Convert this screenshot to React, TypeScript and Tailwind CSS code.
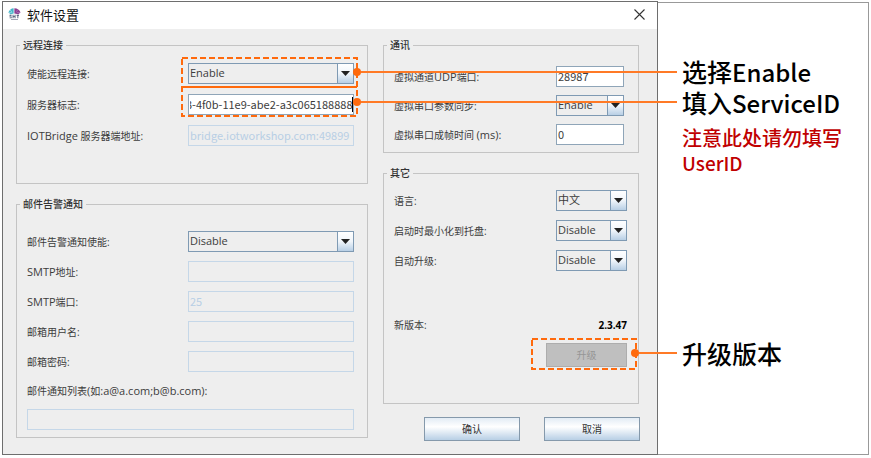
import React, { useEffect, useRef } from "react"

const labelText = "text-[10px] leading-[14px] text-[#3c3c3c]"
const fieldBase = "h-[21px] min-w-0 border text-[11px] leading-[14px] px-px pb-[2px] outline-none"

type GroupProps = { title: string; className: string; children: React.ReactNode }

const Group: React.FC<GroupProps> = ({ title, className, children }) => {
    return (
        <fieldset className={`border border-[#c4c4c4] flex flex-col ${className}`}>
            <legend className="-ml-[7px] px-[3px] text-[10px] leading-[14px] font-medium text-[#333333]">{title}</legend>
            {children}
        </fieldset>
    )
}

type RowProps = { id: string; label: React.ReactNode; children: React.ReactNode }

const Row: React.FC<RowProps> = ({ id, label, children }) => {
    return (
        <div className="flex items-center justify-between">
            <label htmlFor={id} className={`${labelText} whitespace-nowrap`}>{label}</label>
            {children}
        </div>
    )
}

type FieldProps = { id: string; value?: string; disabled?: boolean; className: string }

const Field: React.FC<FieldProps> = ({ id, value = "", disabled = false, className }) => {
    const ref = useRef<HTMLInputElement>(null)

    // long values show their end, where the caret is
    useEffect(() => {
        if (ref.current && !disabled) ref.current.scrollLeft = ref.current.scrollWidth
    }, [disabled])

    const look = disabled
        ? "border-[#c5d7e8] bg-[#eeeeee] text-[#b8cfe5]"
        : "border-[#8fa5b8] bg-white text-[#3c3c3c]"
    return <input ref={ref} id={id} type="text" defaultValue={value} disabled={disabled} className={`${fieldBase} font-['Noto_Sans_CJK_SC',sans-serif] ${look} ${className}`} />
}

type DropdownProps = { id: string; options: string[]; className: string }

const Dropdown: React.FC<DropdownProps> = ({ id, options, className }) => {
    return (
        <div className={`relative ${className}`}>
            <select id={id} className={`${fieldBase} block w-full appearance-none border-[#7f9ab3] bg-[#eeeeee] text-[#3c3c3c]`}>
                {options.map((o) => (
                    <option key={o}>{o}</option>
                ))}
            </select>
            {/* arrow button */}
            <span className="pointer-events-none absolute inset-y-0 right-0 flex w-[17px] items-center justify-center border border-[#7f9ab3] bg-linear-to-b from-white via-[#f0f5fa] to-[#b8cfe5]">
                <svg width="9" height="5" viewBox="0 0 9 5">
                    <path d="M0 0h9L4.5 5z" fill="#222222" />
                </svg>
            </span>
        </div>
    )
}

const Latin: React.FC<{ children: React.ReactNode }> = ({ children }) => <span className="text-[11px]">{children}</span>

const TitleBar: React.FC = () => {
    return (
        <div className="flex h-[27px] items-center justify-between bg-white pb-[2px] pl-[5px] pr-3">
            <div className="flex items-center gap-[6px]">
                <svg width="13" height="13" viewBox="0 0 13 13">
                    <path d="M5.6 0.3C3.2 0.5 1.4 1.8 0.4 4.4L2.6 6.2L5.6 5.4z" fill="#45b5c9" />
                    <path d="M2 2.2l2 1.6M0.9 4.6h3.4" stroke="#d6f2f6" strokeWidth="0.5" />
                    <path d="M6.4 0.3c3 0 5.3 1.6 6.1 4.3L10.4 6.2L6.4 5.4z" fill="#8a3f92" />
                    <path d="M9.6 1.8L8.4 3.8M12 4.6H8.8" stroke="#c99bd0" strokeWidth="0.5" />
                    <path d="M1.6 6.8h2v1H2.4v0.6h1.2v1.8h-2V9.4h1.2V8.8H1.6zM4.6 6.8h0.9v1.2h1.1V6.8h0.9v3.4h-0.9V8.8H5.5v1.4H4.6zM8.6 6.8h2.4v0.9h-0.7v2.5H9.4V7.7H8.6z" fill="#4b5674" />
                    <path d="M3 11h7v1H3z" fill="#a3a5b5" />
                </svg>
                <h1 className="text-[13px] leading-4 text-[#111111]">软件设置</h1>
            </div>
            <button aria-label="关闭" className="flex items-center">
                <svg width="11" height="11" viewBox="0 0 11 11">
                    <path d="M0.5 0.5l10 10M10.5 0.5l-10 10" stroke="#333333" strokeWidth="1.1" />
                </svg>
            </button>
        </div>
    )
}

const dialogButton = "h-6 w-24 border border-[#8599ab] bg-linear-to-b from-[#e3ecf5] via-white via-40% to-[#b8cfe5] text-[10px] leading-[14px] text-[#333333]"
const dash = { fill: "none", stroke: "#ff6a0d", strokeWidth: 2, strokeDasharray: "6 3" }

// line with a dot at its left end, runs out over the dialog's right edge
const Pointer: React.FC<{ className: string }> = ({ className }) => {
    return (
        <div className={`pointer-events-none absolute right-[-20px] flex h-2 items-center ${className}`}>
            <span className="size-2 rounded-full bg-[#ff6a0d]" />
            <span className="h-[2px] flex-1 bg-[#ff7a26]" />
        </div>
    )
}

const SettingsDialog: React.FC = () => {
    return (
        <section className="relative min-w-0 flex-1 border border-[#6e6e6e] bg-[#eeeeee]">
            <TitleBar />
            <form className="flex gap-[15px] pb-[13px] pl-[13px] pr-[18px] pt-[9px]">
                {/* left column */}
                <div className="flex w-[352px] shrink-0 flex-col gap-[13px]">
                    <Group title="远程连接" className="gap-[10px] pb-[37px] pl-[10px] pr-[13px] pt-[11px]">
                        <Row id="remote" label="使能远程连接:">
                            <Dropdown id="remote" options={["Enable", "Disable"]} className="w-[166px]" />
                        </Row>
                        <Row id="service" label="服务器标志:">
                            <div className="relative w-[166px]">
                                <Field id="service" value="3-4f0b-11e9-abe2-a3c065188888" className="block w-full" />
                                <span className="absolute inset-y-[3px] right-px w-px bg-black" />
                            </div>
                        </Row>
                        <Row id="bridge" label={<><Latin>IOTBridge</Latin> 服务器端地址:</>}>
                            <Field id="bridge" value="bridge.iotworkshop.com:49899" disabled className="w-[166px]" />
                        </Row>
                    </Group>
                    <Group title="邮件告警通知" className="gap-[9px] pb-[7px] pl-[10px] pr-[13px] pt-5">
                        <Row id="mail" label="邮件告警通知使能:">
                            <Dropdown id="mail" options={["Disable", "Enable"]} className="w-[166px]" />
                        </Row>
                        <Row id="host" label={<><Latin>SMTP</Latin>地址:</>}>
                            <Field id="host" disabled className="w-[166px]" />
                        </Row>
                        <Row id="port" label={<><Latin>SMTP</Latin>端口:</>}>
                            <Field id="port" value="25" disabled className="w-[166px]" />
                        </Row>
                        <Row id="user" label="邮箱用户名:">
                            <Field id="user" disabled className="w-[166px]" />
                        </Row>
                        <Row id="password" label="邮箱密码:">
                            <Field id="password" disabled className="w-[166px]" />
                        </Row>
                        <div className="flex flex-col gap-[11px] pt-[3px]">
                            <label htmlFor="list" className={labelText}>邮件通知列表<Latin>(</Latin>如<Latin>:a@a.com;b@b.com):</Latin></label>
                            <Field id="list" disabled className="w-full" />
                        </div>
                    </Group>
                </div>

                {/* right column */}
                <div className="flex min-w-0 flex-1 flex-col gap-[13px]">
                    <Group title="通讯" className="gap-2 pb-[7px] pl-[10px] pr-[14px] pt-[14px]">
                        <Row id="udp" label={<>虚拟通道<Latin>UDP</Latin>端口:</>}>
                            <Field id="udp" value="28987" className="w-[68px]" />
                        </Row>
                        <Row id="sync" label="虚拟串口参数同步:">
                            <Dropdown id="sync" options={["Enable", "Disable"]} className="w-[68px]" />
                        </Row>
                        <Row id="frame" label={<>虚拟串口成帧时间 <Latin>(ms):</Latin></>}>
                            <Field id="frame" value="0" className="w-[68px]" />
                        </Row>
                    </Group>
                    <Group title="其它" className="pb-9 pl-[10px] pr-[11px] pt-[10px]">
                        <div className="flex flex-col gap-[9px]">
                            <Row id="lang" label="语言:">
                                <Dropdown id="lang" options={["中文", "English"]} className="w-[71px]" />
                            </Row>
                            <Row id="tray" label="启动时最小化到托盘:">
                                <Dropdown id="tray" options={["Disable", "Enable"]} className="w-[71px]" />
                            </Row>
                            <Row id="auto" label="自动升级:">
                                <Dropdown id="auto" options={["Disable", "Enable"]} className="w-[71px]" />
                            </Row>
                        </div>
                        <div className="mt-[47px] flex justify-between text-[10px] leading-[14px]">
                            <span className="text-[#3c3c3c]">新版本:</span>
                            <b className="text-black">2.3.47</b>
                        </div>
                        <div className="relative mt-[11px] self-end">
                            <button type="button" disabled className="block h-6 w-[81px] border border-[#adadad] bg-[#bfbfbf] text-[10px] leading-[14px] text-[#969696]">升级</button>
                            <svg className="pointer-events-none absolute left-[-15px] top-[-5px]" width="106" height="32">
                                <rect x="1" y="1" width="104" height="30" {...dash} />
                            </svg>
                        </div>
                    </Group>
                    <div className="-mr-px flex justify-end gap-6">
                        <button type="button" className={dialogButton}>确认</button>
                        <button type="button" className={dialogButton}>取消</button>
                    </div>
                </div>
            </form>

            {/* call-outs */}
            <svg className="pointer-events-none absolute left-[178px] top-[55px]" width="178" height="61">
                <rect x="1" y="1" width="175" height="58" {...dash} />
                <path d="M1 30h175" stroke="#ff6a0d" strokeWidth="2" />
            </svg>
            <Pointer className="left-[350px] top-[66px]" />
            <Pointer className="left-[350px] top-[96px]" />
            <Pointer className="top-[347px] w-[46px]" />
        </section>
    )
}

const Notes: React.FC = () => {
    return (
        <aside className="mt-px w-[211px] shrink-0 border border-l-0 border-[#999999] bg-white pl-6 pt-[53px] font-['Noto_Sans_CJK_SC',sans-serif] font-medium text-black">
            <p className="text-[25px] leading-[30px]">
                选择<span className="text-[24px]">Enable</span><br />
                填入<span className="text-[24px]">ServiceID</span>
            </p>
            <p className="mt-[7px] text-[20px] leading-[25px] text-[#c00000]">
                注意此处请勿填写<br />
                <span className="text-[19px]">UserID</span>
            </p>
            <p className="mt-[163px] text-[25px] leading-[30px]">升级版本</p>
        </aside>
    )
}

export default function App() {
    return (
        <main className="flex bg-white pb-[3px] pl-[2px] pr-[2px] pt-px font-['Open_Sans','Noto_Sans_CJK_SC',sans-serif]">
            <SettingsDialog />
            <Notes />
        </main>
    )
}
